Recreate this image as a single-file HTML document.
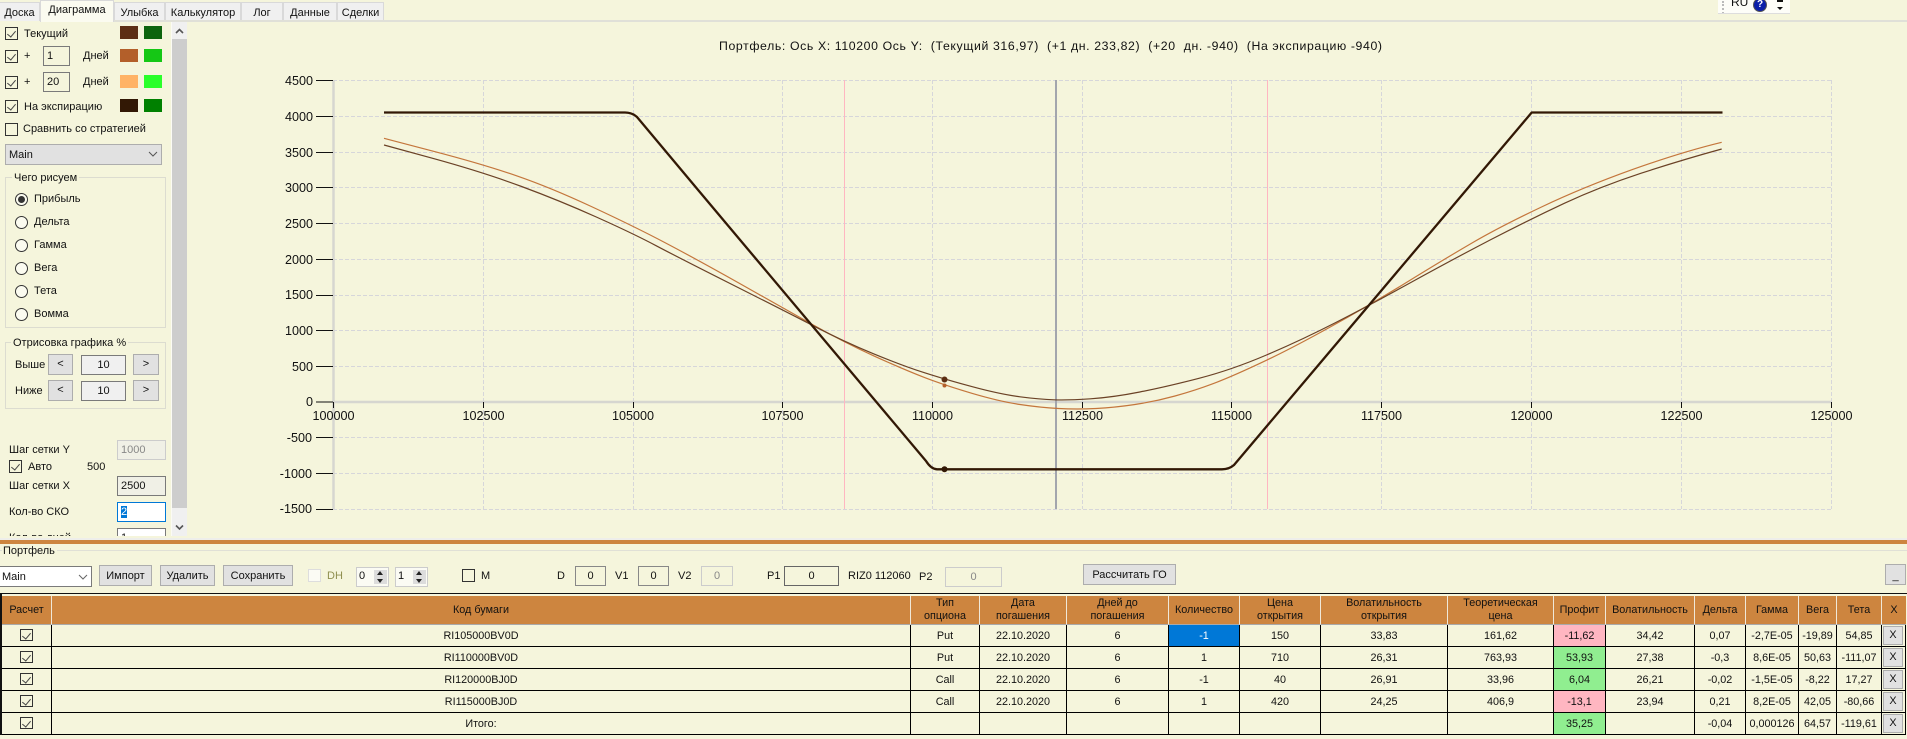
<!DOCTYPE html>
<html><head><meta charset="utf-8">
<style>
html,body{margin:0;padding:0;width:1907px;height:739px;overflow:hidden;background:#f5f5dc}
body{position:relative;font:11px/14px "Liberation Sans","Noto Sans CJK SC",sans-serif;color:#111}
.a{position:absolute;box-sizing:border-box}
.t{position:absolute;white-space:pre;line-height:14px}
.tab{position:absolute;top:2px;height:19px;box-sizing:border-box;background:#f0f0f0;border:1px solid #d9d9d9;border-bottom:0;text-align:center;line-height:20px;font-size:11px}
.cb{position:absolute;box-sizing:border-box;width:13px;height:13px;border:1px solid #333;background:#f5f5dc}
.cb.c::after{content:"";position:absolute;left:3px;top:1px;width:4px;height:7px;border:solid #444;border-width:0 1px 1px 0;transform:rotate(40deg)}
.sw{position:absolute;width:18px;height:13px}
.inp{position:absolute;box-sizing:border-box;border:1px solid #7a7a7a;background:#f5f5dc;height:20px;line-height:18px;text-align:center;font-size:11px}
.btn{position:absolute;box-sizing:border-box;border:1px solid #adadad;background:#e1e1e1;text-align:center;font-size:11px}
.g{position:absolute;box-sizing:border-box;border:1px solid #dcdcd0}
.rd{position:absolute;box-sizing:border-box;width:13px;height:13px;border:1px solid #333;border-radius:50%;background:#fbfbf0}
.rd.on::after{content:"";position:absolute;left:2px;top:2px;width:7px;height:7px;border-radius:50%;background:#333}
table{position:absolute;left:2px;top:596px;border-collapse:separate;border-spacing:0;table-layout:fixed;width:1904px;font-size:10.8px}
td,th{box-sizing:border-box;padding:0;text-align:center;font-weight:normal;overflow:hidden;white-space:nowrap;border-right:1px solid #000;border-bottom:1px solid #000;height:22px;line-height:14px;position:relative}
td{padding-top:1px}
th{height:29px;background:#cd853f;border-right:1px solid #f0e8d8;border-bottom:1px solid #a9a9a9;line-height:13px;white-space:normal}
td .cb{left:18px;top:4px;height:12px}
.xb{position:absolute;left:1px;top:1px;right:2px;bottom:1px;border:1px solid #adadad;background:#e1e1e1;line-height:17px}
.p{background:#ffb6c1}.n{background:#90ee90}
.sp{position:absolute;left:17px;top:2px;width:13px;height:14px;background:#dcdcdc;border-top:0}
</style></head><body>

<!-- tabs -->
<div class="tab" style="left:0;width:40px;border-left:0">Доска</div>
<div class="tab" style="left:40px;width:74px;top:0;height:22px;background:#fbfbf0;line-height:19px">Диаграмма</div>
<div class="tab" style="left:114px;width:51px">Улыбка</div>
<div class="tab" style="left:165px;width:76px">Калькулятор</div>
<div class="tab" style="left:241px;width:42px">Лог</div>
<div class="tab" style="left:283px;width:54px">Данные</div>
<div class="tab" style="left:337px;width:47px">Сделки</div>
<div class="a" style="left:114px;top:20px;width:1793px;height:2px;background:#e0e0d8"></div>

<!-- language widget -->
<div class="a" style="left:1718px;top:0;width:72px;height:14px;background:#fdfdf8;border-bottom:1px solid #ddd;overflow:hidden">
<div class="a" style="left:4px;top:1px;width:2px;height:13px;border-left:2px dotted #bbb"></div>
<div class="t" style="left:13px;top:-5px;font-size:12px">RU</div>
<div class="a" style="left:35px;top:-2px;width:14px;height:14px;border-radius:50%;background:#0b1fa8;border:1px solid #555;color:#fff;font-weight:bold;font-size:10px;line-height:12px;text-align:center">?</div>
<div class="a" style="left:59px;top:0;width:6px;height:2px;background:#111"></div>
<div class="a" style="left:59px;top:7px;width:0;height:0;border:3px solid transparent;border-top:3px solid #111;border-bottom:0"></div>
</div>

<!-- left panel -->
<div class="cb c" style="left:5px;top:27px"></div><div class="t" style="left:24px;top:27px">Текущий</div>
<div class="sw" style="left:120px;top:26px;background:#5c2e13"></div><div class="sw" style="left:144px;top:26px;background:#0d640d"></div>

<div class="cb c" style="left:5px;top:50px"></div><div class="t" style="left:24px;top:49px">+</div>
<div class="inp" style="left:43px;top:46px;width:27px;text-align:left;padding-left:3px">1</div><div class="t" style="left:83px;top:49px">Дней</div>
<div class="sw" style="left:120px;top:49px;background:#b35f2a"></div><div class="sw" style="left:144px;top:49px;background:#15c715"></div>

<div class="cb c" style="left:5px;top:76px"></div><div class="t" style="left:24px;top:75px">+</div>
<div class="inp" style="left:43px;top:72px;width:27px;text-align:left;padding-left:3px">20</div><div class="t" style="left:83px;top:75px">Дней</div>
<div class="sw" style="left:120px;top:75px;background:#ffb366"></div><div class="sw" style="left:144px;top:75px;background:#2aff2a"></div>

<div class="cb c" style="left:5px;top:100px"></div><div class="t" style="left:24px;top:100px">На экспирацию</div>
<div class="sw" style="left:120px;top:99px;background:#321805"></div><div class="sw" style="left:144px;top:99px;background:#008000"></div>

<div class="cb" style="left:5px;top:123px"></div><div class="t" style="left:23px;top:122px">Сравнить со стратегией</div>

<div class="a" style="left:5px;top:144px;width:157px;height:21px;background:#e1e1e1;border:1px solid #adadad;line-height:20px;padding-left:3px">Main
<svg class="a" style="left:142px;top:6px" width="10" height="7"><path d="M1 1L5 5L9 1" fill="none" stroke="#555" stroke-width="1"/></svg></div>

<div class="g" style="left:5px;top:177px;width:161px;height:151px"></div>
<div class="t" style="left:12px;top:171px;background:#f5f5dc;padding:0 2px">Чего рисуем</div>
<div class="rd on" style="left:15px;top:193px"></div><div class="t" style="left:34px;top:192px">Прибыль</div>
<div class="rd" style="left:15px;top:216px"></div><div class="t" style="left:34px;top:215px">Дельта</div>
<div class="rd" style="left:15px;top:239px"></div><div class="t" style="left:34px;top:238px">Гамма</div>
<div class="rd" style="left:15px;top:262px"></div><div class="t" style="left:34px;top:261px">Вега</div>
<div class="rd" style="left:15px;top:285px"></div><div class="t" style="left:34px;top:284px">Тета</div>
<div class="rd" style="left:15px;top:308px"></div><div class="t" style="left:34px;top:307px">Вомма</div>

<div class="g" style="left:5px;top:342px;width:161px;height:67px"></div>
<div class="t" style="left:11px;top:336px;background:#f5f5dc;padding:0 2px">Отрисовка графика %</div>
<div class="t" style="left:15px;top:358px">Выше</div>
<div class="btn" style="left:48px;top:354px;width:25px;height:21px;line-height:19px">&lt;</div>
<div class="inp" style="left:81px;top:355px;width:45px;background:#f0f0f0">10</div>
<div class="btn" style="left:133px;top:354px;width:26px;height:21px;line-height:19px">&gt;</div>
<div class="t" style="left:15px;top:384px">Ниже</div>
<div class="btn" style="left:48px;top:380px;width:25px;height:21px;line-height:19px">&lt;</div>
<div class="inp" style="left:81px;top:381px;width:45px;background:#f0f0f0">10</div>
<div class="btn" style="left:133px;top:380px;width:26px;height:21px;line-height:19px">&gt;</div>

<div class="t" style="left:9px;top:443px">Шаг сетки Y</div>
<div class="inp" style="left:117px;top:440px;width:49px;border-color:#ccc;background:#f0f0e6;color:#888;text-align:left;padding-left:3px">1000</div>
<div class="cb c" style="left:9px;top:460px"></div><div class="t" style="left:28px;top:460px">Авто</div><div class="t" style="left:87px;top:460px">500</div>
<div class="t" style="left:9px;top:479px">Шаг сетки X</div>
<div class="inp" style="left:117px;top:476px;width:49px;text-align:left;padding-left:3px;background:#f0f0e6">2500</div>
<div class="t" style="left:9px;top:505px">Кол-во СКО</div>
<div class="inp" style="left:117px;top:502px;width:49px;background:#fff;border-color:#0078d7;text-align:left;padding-left:3px"><span style="background:#0078d7;color:#fff">2</span></div>
<div class="a" style="left:0;top:524px;width:171px;height:12px;overflow:hidden">
<div class="t" style="left:9px;top:7px">Кол-во дней</div>
<div class="inp" style="left:117px;top:4px;width:49px;background:#fff;text-align:left;padding-left:3px">1</div></div>

<!-- scrollbar -->
<div class="a" style="left:171px;top:22px;width:1px;height:514px;background:#fbfbf5"></div>
<div class="a" style="left:172px;top:22px;width:15px;height:514px;background:#f0f0f0"></div>
<div class="a" style="left:172px;top:39px;width:15px;height:469px;background:#cdcdcd"></div>
<svg class="a" style="left:175px;top:28px" width="10" height="7"><path d="M1 5L4.5 1.5L8 5" fill="none" stroke="#555" stroke-width="1.6"/></svg>
<svg class="a" style="left:175px;top:524px" width="10" height="7"><path d="M1 1.5L4.5 5L8 1.5" fill="none" stroke="#555" stroke-width="1.6"/></svg>

<!-- chart -->
<svg class="a" style="left:0;top:0" width="1907" height="540" font-family="Liberation Sans, sans-serif" font-size="12.6" fill="#111">
<text x="719" y="50" font-size="12.3" xml:space="preserve" textLength="663">Портфель: Ось X: 110200 Ось Y:  (Текущий 316,97)  (+1 дн. 233,82)  (+20  дн. -940)  (На экспирацию -940)</text>
<g stroke="#d6d6da" stroke-width="1" stroke-dasharray="4 2" fill="none">
<path d="M333 80.5H1831M333 116.5H1831M333 152.5H1831M333 187.5H1831M333 223.5H1831M333 259.5H1831M333 295.5H1831M333 330.5H1831M333 366.5H1831M333 437.5H1831M333 473.5H1831M333 509.5H1831"/>
<path d="M483.5 80V509M633.5 80V509M782.5 80V509M932.5 80V509M1082.5 80V509M1231.5 80V509M1381.5 80V509M1531.5 80V509M1681.5 80V509M1831.5 80V509"/>
</g>
<path d="M333 402H1831" stroke="#d6d6d0" stroke-width="2.5"/>
<path d="M333.5 80V509" stroke="#d6d6d0" stroke-width="2.5"/>
<path d="M844.5 80V509M1267.5 80V509" stroke="#ffb6c1" stroke-width="1"/>
<path d="M1056 80V509" stroke="#a3a6ad" stroke-width="2"/>
<g stroke="#111" stroke-width="1" fill="none">
<path d="M316 80.5H333M316 116.5H333M316 152.5H333M316 187.5H333M316 223.5H333M316 259.5H333M316 295.5H333M316 330.5H333M316 366.5H333M316 402H333M316 437.5H333M316 473.5H333M316 509.5H333"/>
<path d="M333.5 402V408M483.5 402V408M633.5 402V408M782.5 402V408M932.5 402V408M1082.5 402V408M1231.5 402V408M1381.5 402V408M1531.5 402V408M1681.5 402V408M1831.5 402V408"/>
</g>
<g text-anchor="end">
<text x="313" y="85">4500</text><text x="313" y="121">4000</text><text x="313" y="157">3500</text><text x="313" y="192">3000</text><text x="313" y="228">2500</text><text x="313" y="264">2000</text><text x="313" y="299">1500</text><text x="313" y="335">1000</text><text x="313" y="371">500</text><text x="313" y="406">0</text><text x="312" y="442">-500</text><text x="312" y="478">-1000</text><text x="312" y="513">-1500</text>
</g>
<g text-anchor="middle">
<text x="333.5" y="420">100000</text><text x="483.5" y="420">102500</text><text x="633" y="420">105000</text><text x="782.5" y="420">107500</text><text x="932.5" y="420">110000</text><text x="1082.5" y="420">112500</text><text x="1231.5" y="420">115000</text><text x="1381.5" y="420">117500</text><text x="1531.5" y="420">120000</text><text x="1681.5" y="420">122500</text><text x="1831.5" y="420">125000</text>
</g>
<path fill="none" stroke="#c4763c" stroke-width="1.2" d="M384,138.3 L433.6,151.3 Q483.3,164.3 516.6,175.8 Q550,187.3 591.3,206.5 Q632.7,225.7 664.7,242.5 Q696.7,259.3 739.7,283.5 Q782.7,307.7 813.3,325 Q844,342.3 873.6,355.8 Q903.3,369.3 924,377.3 Q944.7,385.3 972.3,393.4 Q1000,401.5 1020,404.5 Q1040,407.5 1058.5,408.5 Q1077,409.5 1096,408.5 Q1115,407.5 1135,404.5 Q1155,401.5 1175,396 Q1195,390.5 1213,383.7 Q1231,377 1260.5,363.1 Q1290,349.3 1330,327.1 Q1370,305 1407,282.1 Q1444,259.3 1472,243 Q1500,226.7 1541.5,207 Q1583,187.3 1632.3,169.6 Q1681.7,152 1721.7,142.3"/>
<path fill="none" stroke="#6b4226" stroke-width="1.2" d="M384,145 L433.6,158.6 Q483.3,172.3 521.6,186.5 Q560,200.7 596.3,217 Q632.7,233.3 656.3,245.8 Q680,258.3 731.3,284.1 Q782.7,310 813.3,325.8 Q844,341.7 873.6,353.8 Q903.3,366 924,372.6 Q944.7,379.3 972.3,386.7 Q1000,394.2 1020,396.8 Q1040,399.4 1054,399.8 Q1068,400.3 1090.5,398.8 Q1113,397.3 1139.8,392 Q1166.7,386.7 1199,378.3 Q1231.3,370 1266.5,355 Q1301.7,340 1335.8,322.5 Q1370,305 1411.5,282.1 Q1453,259.3 1490.8,239.6 Q1528.7,220 1564.3,203.3 Q1600,186.7 1640.8,173.3 Q1681.7,160 1721.7,149"/>
<path d="M384 112.5H625Q632 112.5 637 117L700 192.3L926 461Q931 469 937 469.3H1222Q1229 469.3 1234 465L1531.7 112.5H1722.5" fill="none" stroke="#321805" stroke-width="2.3" stroke-linejoin="round"/>
<circle cx="944.5" cy="379.5" r="3" fill="#5c2e13"/><circle cx="944.5" cy="385.5" r="2" fill="#b35f2a"/><circle cx="944.5" cy="469.3" r="3" fill="#321805"/>
</svg>

<!-- splitter -->
<div class="a" style="left:0;top:538px;width:1907px;height:2px;background:#eeeeea"></div>
<div class="a" style="left:0;top:540px;width:1907px;height:4px;background:#cd853f"></div>

<!-- portfolio toolbar -->
<div class="a" style="left:0;top:550px;width:1907px;height:1px;background:#e0e0d6"></div>
<div class="t" style="left:2px;top:544px;background:#f5f5dc;padding:0 2px 0 1px">Портфель</div>
<div class="a" style="left:0;top:566px;width:92px;height:21px;background:#fff;border:1px solid #7a7a7a;border-left:0;line-height:20px;padding-left:2px">Main
<svg class="a" style="left:78px;top:7px" width="10" height="7"><path d="M1 1L5 5L9 1" fill="none" stroke="#666" stroke-width="1"/></svg></div>
<div class="btn" style="left:99px;top:565px;width:53px;height:21px;line-height:20px">Импорт</div>
<div class="btn" style="left:160px;top:565px;width:55px;height:21px;line-height:20px">Удалить</div>
<div class="btn" style="left:223px;top:565px;width:70px;height:21px;line-height:20px">Сохранить</div>
<div class="cb" style="left:308px;top:569px;border-color:#ddd;background:#fbfbf4"></div>
<div class="t" style="left:327px;top:569px;color:#8f8f50">DH</div>
<div class="inp" style="left:356px;top:567px;width:33px;text-align:left;padding-left:2px;border-color:#ccc;background:#fbfbf4;line-height:17px">0
<div class="sp"></div>
<div class="a" style="left:20px;top:3px;border:3.5px solid transparent;border-top:0;border-bottom:4px solid #222"></div><div class="a" style="left:20px;top:11px;border:3.5px solid transparent;border-bottom:0;border-top:4px solid #222"></div></div>
<div class="inp" style="left:395px;top:567px;width:33px;text-align:left;padding-left:2px;border-color:#ccc;background:#fbfbf4;line-height:17px">1
<div class="sp"></div>
<div class="a" style="left:20px;top:3px;border:3.5px solid transparent;border-top:0;border-bottom:4px solid #222"></div><div class="a" style="left:20px;top:11px;border:3.5px solid transparent;border-bottom:0;border-top:4px solid #222"></div></div>
<div class="cb" style="left:462px;top:569px"></div><div class="t" style="left:481px;top:569px">M</div>
<div class="t" style="left:557px;top:569px">D</div><div class="inp" style="left:575px;top:566px;width:31px;border-color:#888">0</div>
<div class="t" style="left:615px;top:569px">V1</div><div class="inp" style="left:638px;top:566px;width:31px;border-color:#888">0</div>
<div class="t" style="left:678px;top:569px">V2</div><div class="inp" style="left:701px;top:566px;width:32px;border-color:#ccc;color:#888">0</div>
<div class="t" style="left:767px;top:569px">P1</div><div class="inp" style="left:784px;top:566px;width:55px;border-color:#666">0</div>
<div class="t" style="left:848px;top:569px">RIZ0 112060</div>
<div class="t" style="left:919px;top:570px">P2</div><div class="inp" style="left:945px;top:567px;width:57px;border-color:#ccc;color:#888">0</div>
<div class="btn" style="left:1083px;top:564px;width:93px;height:21px;line-height:20px">Рассчитать ГО</div>
<div class="btn" style="left:1885px;top:564px;width:21px;height:21px;line-height:22px">_</div>

<!-- table -->
<div class="a" style="left:0;top:593px;width:1907px;height:1px;background:#111"></div>
<div class="a" style="left:0;top:594px;width:2px;height:141px;background:#111"></div>
<table>
<colgroup><col style="width:50px"><col style="width:859px"><col style="width:69px"><col style="width:87px"><col style="width:102px"><col style="width:71px"><col style="width:81px"><col style="width:127px"><col style="width:106px"><col style="width:52px"><col style="width:89px"><col style="width:51px"><col style="width:53px"><col style="width:38px"><col style="width:45px"><col style="width:24px"></colgroup>
<tr><th>Расчет</th><th>Код бумаги</th><th>Тип<br>опциона</th><th>Дата<br>погашения</th><th>Дней до<br>погашения</th><th>Количество</th><th>Цена<br>открытия</th><th>Волатильность<br>открытия</th><th>Теоретическая<br>цена</th><th>Профит</th><th>Волатильность</th><th>Дельта</th><th>Гамма</th><th>Вега</th><th>Тета</th><th style="border-right:0">X</th></tr>
<tr><td><span class="cb c"></span></td><td>RI105000BV0D</td><td>Put</td><td>22.10.2020</td><td>6</td><td style="background:#0078d7;color:#fff">-1</td><td>150</td><td>33,83</td><td>161,62</td><td class="p">-11,62</td><td>34,42</td><td>0,07</td><td>-2,7E-05</td><td>-19,89</td><td>54,85</td><td><div class="xb">X</div></td></tr>
<tr><td><span class="cb c"></span></td><td>RI110000BV0D</td><td>Put</td><td>22.10.2020</td><td>6</td><td>1</td><td>710</td><td>26,31</td><td>763,93</td><td class="n">53,93</td><td>27,38</td><td>-0,3</td><td>8,6E-05</td><td>50,63</td><td>-111,07</td><td><div class="xb">X</div></td></tr>
<tr><td><span class="cb c"></span></td><td>RI120000BJ0D</td><td>Call</td><td>22.10.2020</td><td>6</td><td>-1</td><td>40</td><td>26,91</td><td>33,96</td><td class="n">6,04</td><td>26,21</td><td>-0,02</td><td>-1,5E-05</td><td>-8,22</td><td>17,27</td><td><div class="xb">X</div></td></tr>
<tr><td><span class="cb c"></span></td><td>RI115000BJ0D</td><td>Call</td><td>22.10.2020</td><td>6</td><td>1</td><td>420</td><td>24,25</td><td>406,9</td><td class="p">-13,1</td><td>23,94</td><td>0,21</td><td>8,2E-05</td><td>42,05</td><td>-80,66</td><td><div class="xb">X</div></td></tr>
<tr><td><span class="cb c"></span></td><td>Итого:</td><td></td><td></td><td></td><td></td><td></td><td></td><td></td><td class="n">35,25</td><td></td><td>-0,04</td><td>0,000126</td><td>64,57</td><td>-119,61</td><td><div class="xb">X</div></td></tr>
</table>
</body></html>
